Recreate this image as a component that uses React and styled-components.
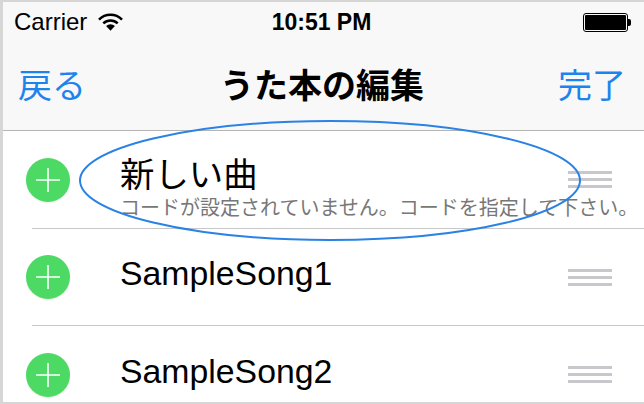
import styled, { createGlobalStyle } from 'styled-components';

const songs = [
    { name: '新しい曲', note: 'コードが設定されていません。コードを指定して下さい。' },
    { name: 'SampleSong1' },
    { name: 'SampleSong2' },
];

const App = () => {
    return (
        <Frame>
            <GlobalStyle />
            <Header>
                <StatusBar>
                    <Carrier>
                        Carrier
                        <svg width="25" height="18" viewBox="0 0 26 18">
                            <path d="M1 6.5 A17 17 0 0 1 25 6.5" fill="none" stroke="#000" strokeWidth="2.6" />
                            <path d="M5.5 10.5 A11 11 0 0 1 20.5 10.5" fill="none" stroke="#000" strokeWidth="2.6" />
                            <path d="M13 18 L8.4 13.2 A6.5 6.5 0 0 1 17.6 13.2 Z" fill="#000" />
                        </svg>
                    </Carrier>
                    <Clock>10:51 PM</Clock>
                    <Battery>
                        <BatteryBody><BatteryFill /></BatteryBody>
                        <BatteryNub />
                    </Battery>
                </StatusBar>
                <NavBar>
                    <NavButton>戻る</NavButton>
                    <Title>うた本の編集</Title>
                    <NavButton $right>完了</NavButton>
                </NavBar>
            </Header>
            <List>
                {songs.map((song) => {
                    return (
                        <Row key={song.name}>
                            <AddButton>
                                <svg width="24" height="24" viewBox="0 0 24 24">
                                    <path d="M12 0 V24 M0 12 H24" stroke="#fff" strokeWidth="1.6" />
                                </svg>
                            </AddButton>
                            <Text $hasNote={!!song.note}>
                                <SongName $hasNote={!!song.note}>{song.name}</SongName>
                                {song.note && <SongNote>{song.note}</SongNote>}
                            </Text>
                            <Handle><i /><i /><i /></Handle>
                        </Row>
                    );
                })}
            </List>
            <Circle width="644" height="404" viewBox="0 0 644 404">
                <ellipse cx="330" cy="180.5" rx="250" ry="59.5" fill="none" stroke="#2a82e4" strokeWidth="2" />
            </Circle>
        </Frame>
    );
};

export default App;

const GlobalStyle = createGlobalStyle`
    html, body {
        margin: 0;
        background: #fff;
    }
    body {
        font-family: 'Liberation Sans', 'Noto Sans CJK JP', sans-serif;
    }
`;

const Frame = styled.div`
    position: relative;
    box-sizing: border-box;
    width: 644px;
    height: 404px;
    overflow: hidden;
    background: #fff;
    border: solid #d6d6d6;
    border-width: 2px 0 2px 3px;
`;

const Header = styled.header`
    height: 128px;
    background: #f8f8f8;
    border-bottom: 1px solid #b4b4b4;
`;

const StatusBar = styled.div`
    display: grid;
    grid-template-columns: 1fr auto 1fr;
    align-items: center;
    height: 40px;
    padding: 0 13px 0 11px;
    color: #000;
`;

const Carrier = styled.div`
    display: flex;
    align-items: center;
    gap: 11px;
    font-size: 24px;
`;

const Clock = styled.div`
    font-size: 23px;
    font-weight: 700;
    margin-left: -2px;
`;

const Battery = styled.div`
    display: flex;
    align-items: center;
    justify-self: end;
`;

const BatteryBody = styled.div`
    box-sizing: border-box;
    width: 45px;
    height: 19px;
    padding: 1px;
    border: 1px solid #000;
    border-radius: 3px;
`;

const BatteryFill = styled.div`
    height: 100%;
    background: #000;
    border-radius: 1px;
`;

const BatteryNub = styled.div`
    width: 3px;
    height: 7px;
    background: #000;
    border-radius: 0 2px 2px 0;
`;

const NavBar = styled.nav`
    box-sizing: border-box;
    display: grid;
    grid-template-columns: 1fr auto 1fr;
    align-items: center;
    height: 88px;
    padding: 0 18px 6px 15px;
`;

const NavButton = styled.div`
    font-size: 34px;
    color: #1d84ee;
    text-align: ${props => props.$right ? 'right' : 'left'};
`;

const Title = styled.h1`
    margin: 0;
    font-size: 34px;
    font-weight: 700;
    color: #000;
`;

const List = styled.div`
    display: flex;
    flex-direction: column;
`;

const Row = styled.div`
    display: flex;
    align-items: center;
    height: 97.5px;
    flex: none;
    padding: 0 32px 0 23px;
    position: relative;

    &::after {
        content: '';
        position: absolute;
        left: 29px;
        right: 0;
        bottom: 0;
        height: 1px;
        background: #c8c8c8;
    }
`;

const AddButton = styled.div`
    flex: none;
    display: flex;
    align-items: center;
    justify-content: center;
    width: 44px;
    height: 44px;
    border-radius: 50%;
    background: #4cd964;
    box-shadow: 0 1px 2px rgba(0, 0, 0, 0.08);
`;

const Text = styled.div`
    flex: 1;
    min-width: 0;
    margin-left: 50px;
    margin-top: ${props => props.$hasNote ? '17px' : '-8px'};
    white-space: nowrap;
`;

const SongName = styled.div`
    font-size: ${props => props.$hasNote ? '34.4px' : '33.8px'};
    line-height: 40px;
    color: #000;
`;

const SongNote = styled.div`
    font-size: 20px;
    line-height: 26px;
    color: #777;
`;

const Handle = styled.div`
    flex: none;
    display: flex;
    flex-direction: column;
    gap: 4px;
    width: 44px;

    i {
        display: block;
        height: 3px;
        background: #c7c7cc;
    }
`;

const Circle = styled.svg`
    position: absolute;
    top: -2px;
    left: -3px;
    pointer-events: none;
`;
